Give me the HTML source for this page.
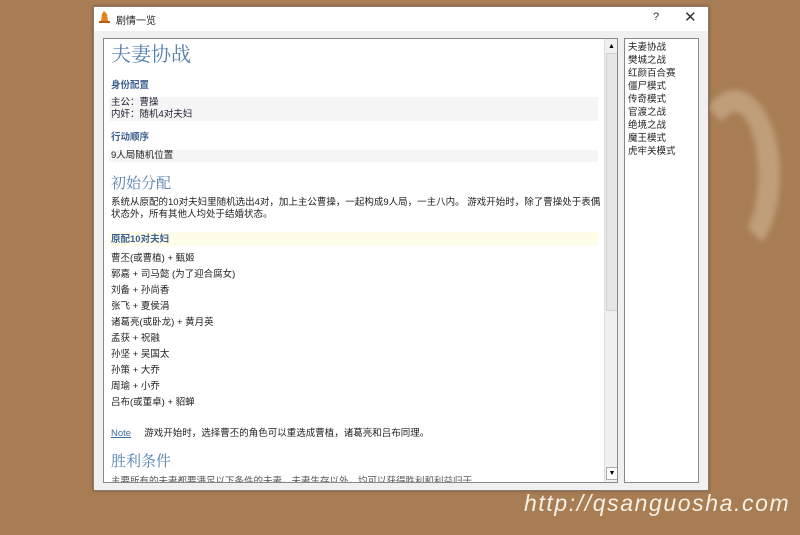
<!DOCTYPE html>
<html><head><meta charset="utf-8"><style>
*{margin:0;padding:0;box-sizing:border-box}
body{width:800px;height:535px;overflow:hidden;background:#a87d53;position:relative;font-family:"Liberation Sans","Noto Sans CJK SC",sans-serif;}
.abs{position:absolute}
#dlg{left:93px;top:6px;width:616px;height:485px;background:#f0f0f0;border:1px solid #8a7a6a;box-shadow:0 0 3px rgba(0,0,0,.3)}
#tb{left:0;top:0;width:614px;height:24px;background:#fff}
#content{left:9px;top:31px;width:515px;height:445px;background:#fff;border:1px solid #888;overflow:hidden}
.t{position:absolute;left:7px;font-size:9.5px;color:#222;white-space:nowrap;line-height:12px}
.h{color:#3d6aa0;font-family:"Liberation Serif","Noto Serif CJK SC",serif}
.sub{color:#3d5f90;font-weight:bold;font-size:9.5px}
.band{position:absolute;left:5px;width:489px;background:#f5f5f5}
#list{left:530px;top:31px;width:75px;height:445px;background:#fff;border:1px solid #888;font-size:9.5px;line-height:13px;color:#222;padding:2px 3px}
</style></head><body>
<div class="abs" style="left:690px;top:90px;width:90px;height:170px;border-radius:50%;border:22px solid rgba(235,220,195,.35);border-left-color:transparent;border-bottom-color:transparent;filter:blur(3px)"></div>
<div id="dlg" class="abs">
 <div id="tb" class="abs">
  <svg class="abs" style="left:4px;top:3px" width="13" height="14" viewBox="0 0 13 14"><path d="M6 1 L9 4 L10 11 L3 11 L4 4Z" fill="#e0861a"/><rect x="1" y="11" width="11" height="2" fill="#b85a10"/></svg>
  <div class="abs" style="left:22px;top:5px;font-size:10px;color:#222">剧情一览</div>
  <div class="abs" style="left:559px;top:4px;font-size:11px;color:#333">?</div>
  <div class="abs" style="left:590px;top:1px;font-size:15px;color:#333">✕</div>
 </div>
 <div id="content" class="abs">
  <div class="t h" style="top:4px;font-size:20px;line-height:24px;color:#5680b0">夫妻协战</div>
  <div class="t sub" style="top:41px">身份配置</div>
  <div class="band" style="top:58px;height:24px"></div>
  <div class="t" style="top:58px;color:#223">主公：曹操<br>内奸：随机4对夫妇</div>
  <div class="t sub" style="top:93px">行动顺序</div>
  <div class="band" style="top:111px;height:12px"></div>
  <div class="t" style="top:111px">9人局随机位置</div>
  <div class="t h" style="top:136px;font-size:15px;line-height:18px;color:#5680b0">初始分配</div>
  <div class="t" style="top:158px">系统从原配的10对夫妇里随机选出4对，加上主公曹操，一起构成9人局，一主八内。 游戏开始时，除了曹操处于表偶<br>状态外，所有其他人均处于结婚状态。</div>
  <div class="band" style="top:193px;height:14px;background:#fdfdea"></div>
  <div class="t sub" style="top:195px">原配10对夫妇</div>
  <div class="t" style="top:212px;line-height:16px">曹丕(或曹植) + 甄姬<br>郭嘉 + 司马懿 (为了迎合腐女)<br>刘备 + 孙尚香<br>张飞 + 夏侯涓<br>诸葛亮(或卧龙) + 黄月英<br>孟获 + 祝融<br>孙坚 + 吴国太<br>孙策 + 大乔<br>周瑜 + 小乔<br>吕布(或董卓) + 貂蝉</div>
  <div class="t" style="top:389px"><span style="color:#3d6aa0;text-decoration:underline">Note</span>&nbsp;&nbsp;&nbsp;&nbsp;&nbsp;游戏开始时，选择曹丕的角色可以重选成曹植，诸葛亮和吕布同理。</div>
  <div class="t h" style="top:414px;font-size:15px;line-height:18px;color:#5680b0">胜利条件</div>
  <div class="t" style="top:437px;color:#555">主要所有的夫妻都要满足以下条件的夫妻，夫妻生存以外，均可以获得胜利和利益归于</div>
  <div class="abs" style="left:500px;top:0;width:14px;height:443px;background:#f0f0f0;border-left:1px solid #ddd">
   <div class="abs" style="left:3px;top:4px;font-size:7px;color:#000">▲</div>
   <div class="abs" style="left:1px;top:14px;width:12px;height:258px;background:#e6e6e6;border:1px solid #d0d0d0"></div>
   <div class="abs" style="left:1px;top:428px;width:12px;height:13px;background:#fff;border:1px solid #aaa;font-size:7px;text-align:center;line-height:11px">▼</div>
  </div>
 </div>
 <div id="list" class="abs">夫妻协战<br>樊城之战<br>红颜百合赛<br>僵尸模式<br>传奇模式<br>官渡之战<br>绝境之战<br>魔王模式<br>虎牢关模式</div>
</div>
<div class="abs" style="left:524px;top:490px;font-size:23px;font-style:italic;color:#f6f0e6;letter-spacing:1.6px;font-family:'Liberation Sans',sans-serif">http://qsanguosha.com</div>
</body></html>
